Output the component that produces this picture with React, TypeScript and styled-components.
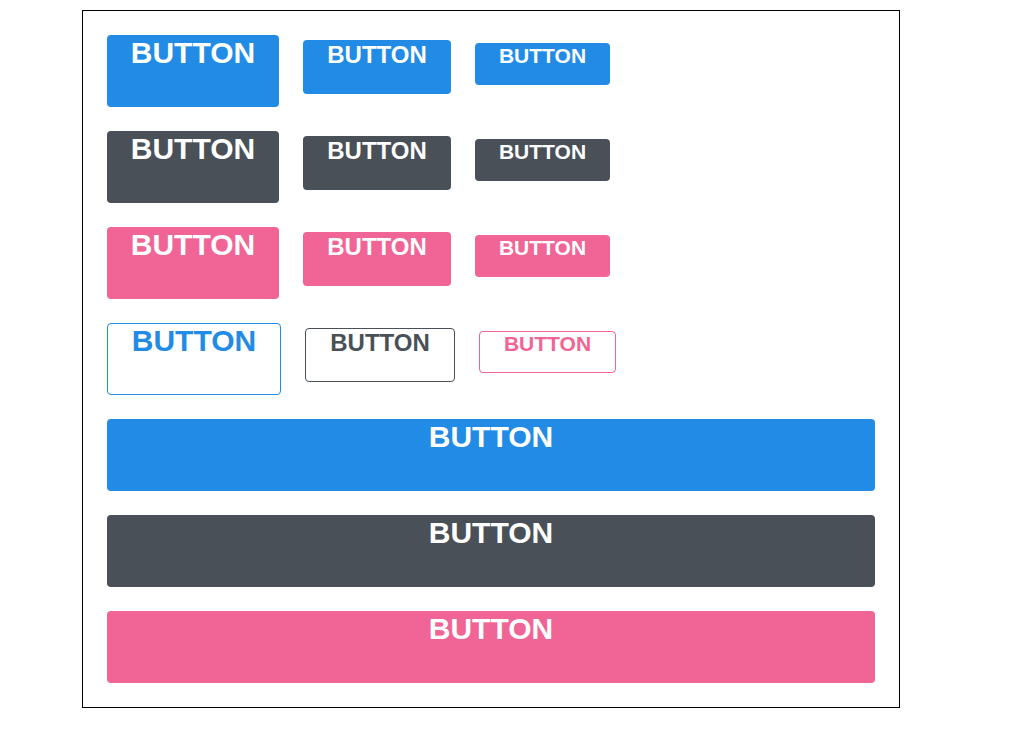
import styled, { createGlobalStyle, css } from "styled-components";

type Size = "lg" | "md" | "sm";
type Tone = "blue" | "dark" | "pink";

const tones: Record<Tone, string> = {
  blue: "#228be6",
  dark: "#495057",
  pink: "#f06595",
};

const sizes: Record<Size, { font: number; height: number; width: number; top: number }> = {
  lg: { font: 30, height: 72, width: 172, top: 1 },
  md: { font: 24, height: 54, width: 148, top: 1 },
  sm: { font: 21, height: 42, width: 135, top: 1 },
};

const GlobalStyle = createGlobalStyle`
  body {
    margin: 0;
    background: #fff;
    font-family: "Liberation Sans", Arial, sans-serif;
  }
`;

const App = () => {
  const filled: Tone[] = ["blue", "dark", "pink"];
  const scale: Size[] = ["lg", "md", "sm"];

  return (
    <>
      <GlobalStyle />
      <Frame>
        {filled.map((tone) => (
          <Row key={tone}>
            {scale.map((size) => (
              <Button key={size} $tone={tone} $size={size}>
                BUTTON
              </Button>
            ))}
          </Row>
        ))}
        <Row>
          {scale.map((size, i) => (
            <Button key={size} $tone={filled[i]} $size={size} $outline>
              BUTTON
            </Button>
          ))}
        </Row>
        {filled.map((tone) => (
          <Button key={tone} $tone={tone} $size="lg" $block>
            BUTTON
          </Button>
        ))}
      </Frame>
    </>
  );
};

export default App;

const Frame = styled.div`
  box-sizing: border-box;
  width: 818px;
  margin: 10px 0 0 82px;
  padding: 24px;
  border: 1px solid #000;
  display: flex;
  flex-direction: column;
  gap: 24px;
`;

const Row = styled.div`
  display: flex;
  align-items: baseline;
  gap: 24px;
`;

const Button = styled.div<{ $tone: Tone; $size: Size; $outline?: boolean; $block?: boolean }>`
  box-sizing: border-box;
  height: ${({ $size }) => sizes[$size].height}px;
  width: ${({ $size, $outline, $block }) =>
    $block ? "100%" : `${sizes[$size].width + ($outline ? 2 : 0)}px`};
  padding-top: ${({ $size, $outline }) => sizes[$size].top - ($outline ? 1 : 0)}px;
  border-radius: 4px;
  font-size: ${({ $size }) => sizes[$size].font}px;
  font-weight: 700;
  line-height: normal;
  text-align: center;
  cursor: pointer;

  ${({ $tone, $outline }) =>
    $outline
      ? css`
          background: #fff;
          color: ${tones[$tone]};
          border: 1px solid ${tones[$tone]};
        `
      : css`
          background: ${tones[$tone]};
          color: #fff;
        `}
`;
